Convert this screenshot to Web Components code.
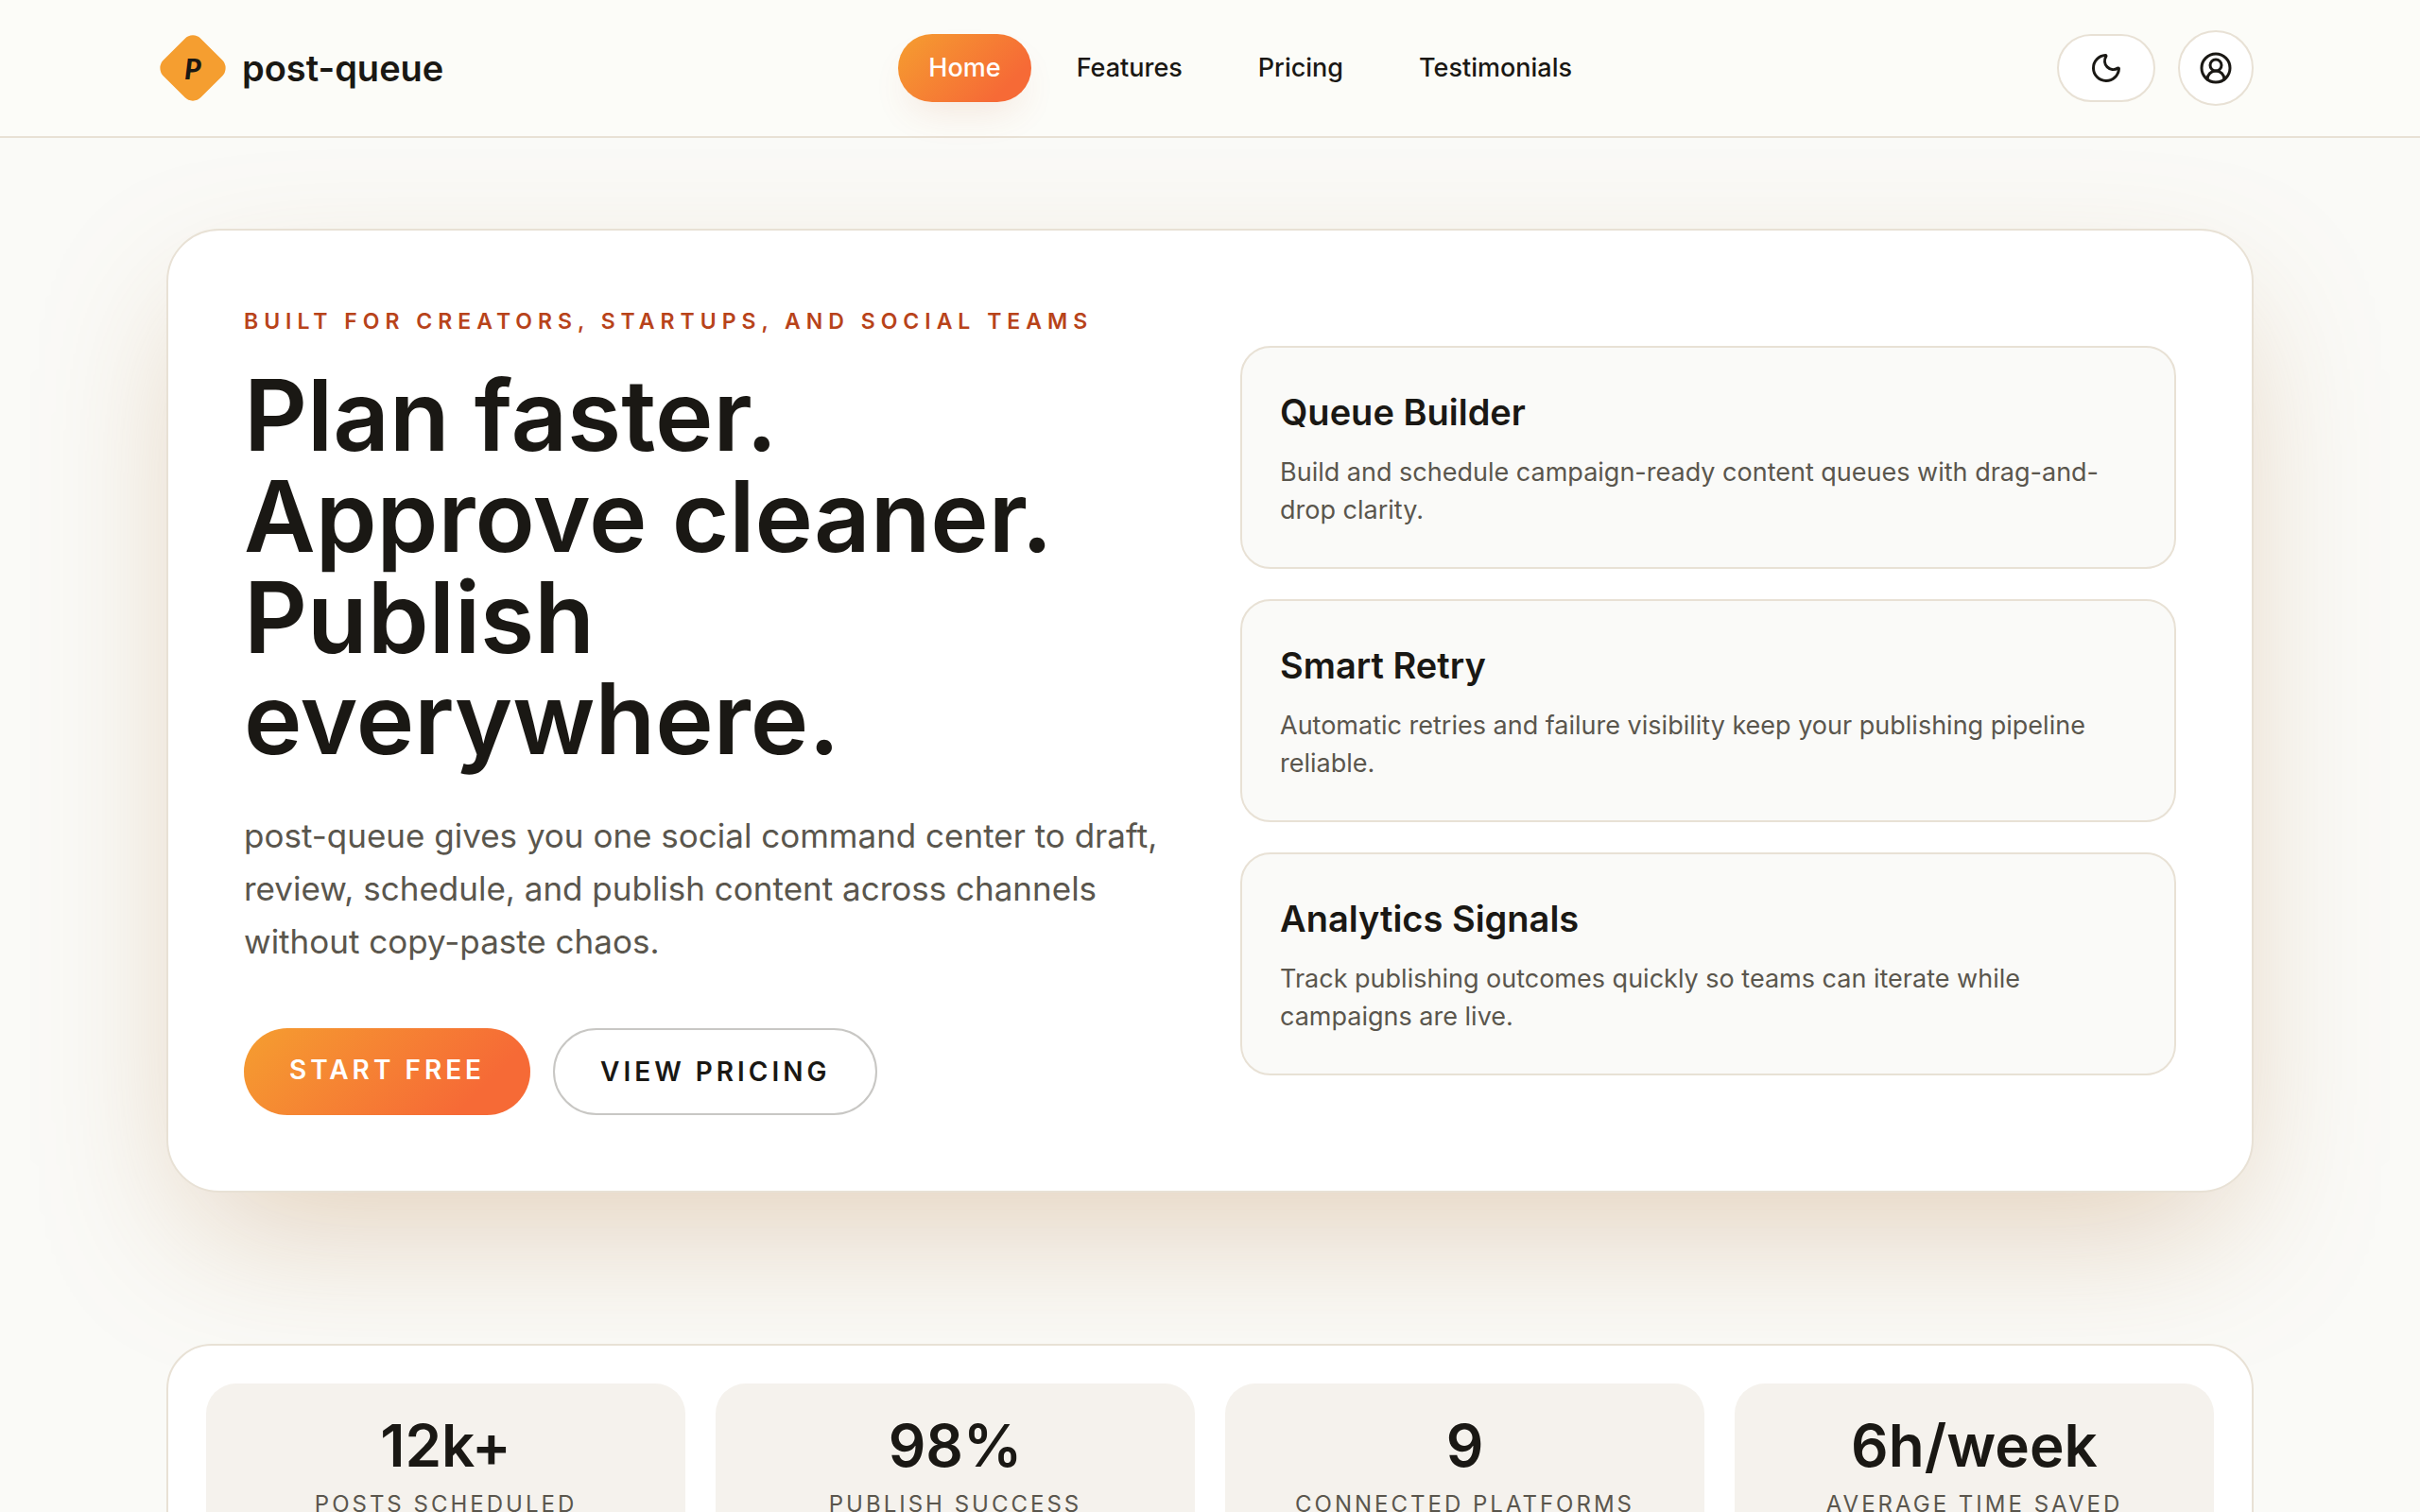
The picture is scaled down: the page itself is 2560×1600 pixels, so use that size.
<!DOCTYPE html>
<html lang="en">
<head>
<meta charset="utf-8">
<meta name="viewport" content="width=device-width, initial-scale=1">
<title>post-queue</title>
<style>
    :root {
        --bg: #fafaf7;
        --bg-header: #fcfcf8;
        --surface: #ffffff;
        --surface-alt: #fafaf8;
        --surface-muted: #f5f2ed;
        --line: #e8e1d5;
        --line-strong: #c8c7c4;
        --ink: #1a1814;
        --ink-soft: #5a564d;
        --accent: #b8431a;
        --amber: #f59e30;
        --flame: #f66a36;
        --gradient: linear-gradient(135deg, var(--amber), var(--flame) 80%);
        --font-display: Inter, "Liberation Sans", sans-serif;
        --shell: min(2208px, 100% - 96px);
    }

    body {
        margin: 0;
        background: var(--bg);
        color: var(--ink);
        font-family: Inter, "Liberation Sans", sans-serif;
        font-size: 27px;
        line-height: 40px;
    }

    main {
        width: var(--shell);
        margin: 0 auto;
        padding: 96px 0;
        display: grid;
        gap: 160px;
    }
</style>
</head>
<body>

<template id="pq-header-template">
    <style>
        :host {
            display: block;
            position: relative;
            z-index: 1;
            background: var(--bg-header);
            border-bottom: 2px solid var(--line);
        }

        .bar {
            width: var(--shell);
            margin: 0 auto;
            padding: 32px 0;
            display: flex;
            align-items: center;
            justify-content: space-between;
        }

        nav {
            display: flex;
            gap: 16px;
        }

        .actions {
            display: flex;
            align-items: center;
            gap: 24px;
        }
    </style>
    <header class="bar">
        <slot name="brand"></slot>
        <nav aria-label="Main"><slot name="nav"></slot></nav>
        <div class="actions"><slot name="actions"></slot></div>
    </header>
</template>

<template id="pq-brand-template">
    <style>
        :host {
            display: block;
        }

        a {
            display: flex;
            align-items: center;
            gap: 24px;
            color: inherit;
            text-decoration: none;
            font-family: var(--font-display);
            font-size: 38px;
            font-weight: 600;
        }

        .mark {
            width: 56px;
            height: 56px;
            border-radius: 12px;
            background: var(--amber);
            transform: rotate(45deg);
            display: grid;
            place-items: center;
        }

        .mark span {
            transform: rotate(-45deg);
            font-family: Lato, sans-serif;
            font-size: 30px;
            font-style: italic;
            font-weight: 900;
        }
    </style>
    <a href="#home">
        <span class="mark"><span>P</span></span>
        <slot></slot>
    </a>
</template>

<template id="pq-nav-link-template">
    <style>
        :host {
            display: block;
        }

        a {
            display: block;
            padding: 16px 32px;
            border-radius: 36px;
            color: inherit;
            text-decoration: none;
            font-weight: 500;
        }

        :host([active]) a {
            background: var(--gradient);
            box-shadow: 0 20px 40px -12px rgb(190 90 50 / 0.14);
            color: #ffffff;
        }
    </style>
    <a><slot></slot></a>
</template>

<template id="pq-icon-button-template">
    <style>
        :host {
            display: block;
        }

        button {
            display: block;
            padding: 16px 32px;
            border: 2px solid var(--line);
            border-radius: 40px;
            background: var(--surface);
            color: inherit;
            cursor: pointer;
        }

        :host([round]) button {
            padding: 20px;
        }

        svg {
            display: block;
            width: 36px;
            height: 36px;
            fill: none;
            stroke: currentColor;
            stroke-width: 2;
            stroke-linecap: round;
            stroke-linejoin: round;
        }
    </style>
    <button type="button"><svg viewBox="0 0 24 24" aria-hidden="true"></svg></button>
</template>

<template id="pq-hero-template">
    <style>
        :host {
            display: grid;
            grid-template-columns: 1fr 1fr;
            gap: 64px;
            align-items: center;
            padding: 80px;
            border: 2px solid var(--line);
            border-radius: 56px;
            background: var(--surface);
            box-shadow: 0 60px 160px -32px rgb(180 125 70 / 0.36);
        }

        .eyebrow {
            margin: 0 0 30px;
            color: var(--accent);
            font-size: 23px;
            font-weight: 600;
            line-height: 32px;
            letter-spacing: 6px;
            text-transform: uppercase;
        }

        h1 {
            margin: 0 0 42px;
            font-family: var(--font-display);
            font-size: 104px;
            font-weight: 600;
            line-height: 107px;
        }

        .lead {
            margin: 0 0 64px;
            color: var(--ink-soft);
            font-size: 35px;
            line-height: 56px;
        }

        .actions {
            display: flex;
            gap: 24px;
        }

        .features {
            display: grid;
            gap: 32px;
        }
    </style>
    <div>
        <p class="eyebrow"><slot name="eyebrow"></slot></p>
        <h1><slot name="title"></slot></h1>
        <p class="lead"><slot name="lead"></slot></p>
        <div class="actions"><slot name="actions"></slot></div>
    </div>
    <div class="features"><slot name="features"></slot></div>
</template>

<template id="pq-cta-template">
    <style>
        :host {
            display: flex;
        }

        a {
            padding: 24px 48px;
            border-radius: 46px;
            background: var(--gradient);
            color: #ffffff;
            font-size: 28px;
            font-weight: 600;
            letter-spacing: 4px;
            text-decoration: none;
            text-transform: uppercase;
        }

        :host([outline]) a {
            border: 2px solid var(--line-strong);
            background: none;
            color: inherit;
        }
    </style>
    <a><slot></slot></a>
</template>

<template id="pq-feature-template">
    <style>
        :host {
            display: block;
            padding: 40px;
            border: 2px solid var(--line);
            border-radius: 32px;
            background: var(--surface-alt);
        }

        h2 {
            margin: 0 0 16px;
            font-family: var(--font-display);
            font-size: 38px;
            font-weight: 600;
            line-height: 56px;
        }

        p {
            margin: 0;
            color: var(--ink-soft);
        }
    </style>
    <h2><slot name="title"></slot></h2>
    <p><slot></slot></p>
</template>

<template id="pq-stats-template">
    <style>
        :host {
            display: grid;
            grid-template-columns: repeat(4, 1fr);
            gap: 32px;
            padding: 40px;
            border: 2px solid var(--line);
            border-radius: 48px;
            background: var(--surface);
        }
    </style>
    <slot></slot>
</template>

<template id="pq-stat-template">
    <style>
        :host {
            display: block;
            padding: 32px;
            border-radius: 32px;
            background: var(--surface-muted);
            text-align: center;
        }

        .value {
            margin: 0 0 12px;
            font-family: var(--font-display);
            font-size: 62px;
            font-weight: 600;
            line-height: 68px;
        }

        .label {
            margin: 0;
            color: var(--ink-soft);
            font-size: 24px;
            line-height: 32px;
            letter-spacing: 3px;
            text-transform: uppercase;
        }
    </style>
    <p class="value"><slot name="value"></slot></p>
    <p class="label"><slot></slot></p>
</template>

<pq-header>
    <pq-brand slot="brand">post-queue</pq-brand>
    <pq-nav-link slot="nav" href="#home" active>Home</pq-nav-link>
    <pq-nav-link slot="nav" href="#features">Features</pq-nav-link>
    <pq-nav-link slot="nav" href="#pricing">Pricing</pq-nav-link>
    <pq-nav-link slot="nav" href="#testimonials">Testimonials</pq-nav-link>
    <pq-icon-button slot="actions" icon="moon" label="Toggle theme"></pq-icon-button>
    <pq-icon-button slot="actions" icon="user" label="Account" round></pq-icon-button>
</pq-header>

<main>
    <pq-hero id="home">
        <span slot="eyebrow">Built for creators, startups, and social teams</span>
        <span slot="title">Plan faster.<br>Approve cleaner.<br>Publish<br>everywhere.</span>
        <span slot="lead">post-queue gives you one social command center to draft, review, schedule, and publish content across channels without copy-paste chaos.</span>
        <pq-cta slot="actions" href="#start">Start free</pq-cta>
        <pq-cta slot="actions" href="#pricing" outline>View pricing</pq-cta>
        <pq-feature slot="features">
            <span slot="title">Queue Builder</span>
            Build and schedule campaign-ready content queues with drag-and-drop clarity.
        </pq-feature>
        <pq-feature slot="features">
            <span slot="title">Smart Retry</span>
            Automatic retries and failure visibility keep your publishing pipeline reliable.
        </pq-feature>
        <pq-feature slot="features">
            <span slot="title">Analytics Signals</span>
            Track publishing outcomes quickly so teams can iterate while campaigns are live.
        </pq-feature>
    </pq-hero>

    <pq-stats>
        <pq-stat><span slot="value">12k+</span>Posts scheduled</pq-stat>
        <pq-stat><span slot="value">98%</span>Publish success</pq-stat>
        <pq-stat><span slot="value">9</span>Connected platforms</pq-stat>
        <pq-stat><span slot="value">6h/week</span>Average time saved</pq-stat>
    </pq-stats>
</main>

<script type="module">
    const ICONS = {
        moon: `<path d="M20.985 12.486a9 9 0 1 1-9.473-9.472c.405-.022.617.46.402.803a6 6 0 0 0 8.268 8.268c.344-.215.825-.004.803.401"/>`,
        user: `<path d="M18 20a6 6 0 0 0-12 0"/><circle cx="12" cy="10" r="4"/><circle cx="12" cy="12" r="10"/>`,
    };

    // base element: clones "<tag>-template" into an open shadow root
    class PqElement extends HTMLElement {
        constructor() {
            super();

            const template = document.getElementById(`${this.localName}-template`);
            this.attachShadow({ mode: "open" }).append(template.content.cloneNode(true));
        }
    }

    class PqLink extends PqElement {
        connectedCallback() {
            this.shadowRoot.querySelector("a").href = this.getAttribute("href");
        }
    }

    customElements.define("pq-header", class extends PqElement {});
    customElements.define("pq-brand", class extends PqElement {});
    customElements.define("pq-nav-link", class extends PqLink {});
    customElements.define("pq-cta", class extends PqLink {});
    customElements.define("pq-hero", class extends PqElement {});
    customElements.define("pq-feature", class extends PqElement {});
    customElements.define("pq-stats", class extends PqElement {});
    customElements.define("pq-stat", class extends PqElement {});

    customElements.define(
        "pq-icon-button",
        class extends PqElement {
            connectedCallback() {
                this.shadowRoot.querySelector("button").ariaLabel = this.getAttribute("label");
                this.shadowRoot.querySelector("svg").innerHTML = ICONS[this.getAttribute("icon")];
            }
        },
    );
</script>
</body>
</html>
